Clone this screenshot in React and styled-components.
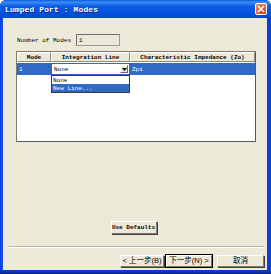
import React from "react";
import styled, { createGlobalStyle } from "styled-components";

const Global = createGlobalStyle`
  html, body { margin: 0; padding: 0; background: #fff; }
  body { width: 271px; height: 274px; overflow: hidden; }
`;

const Frame = styled.div`
  width: 271px;
  height: 274px;
  box-sizing: border-box;
  display: flex;
  flex-direction: column;
  background: linear-gradient(90deg, #0831d9 0, #1a5ae8 2px, #0a3fd4 3px, #0a3fd4 100%);
  border-radius: 6px 6px 0 0;
  padding: 0 4px 4px 3px;
  position: relative;
  &::after {
    content: "";
    position: absolute;
    left: 0; right: 0; bottom: 0; height: 4px;
    background: linear-gradient(180deg, #0a3fd4, #0831a8 70%, #001c7a);
  }
`;

const TitleBar = styled.div`
  height: 18px;
  margin: 0 -4px 0 -3px;
  padding: 0 5px 0 5px;
  display: flex;
  align-items: center;
  justify-content: space-between;
  border-radius: 6px 6px 0 0;
  background: linear-gradient(180deg, #0a5ae0 0%, #3d8cf3 12%, #0c5be6 35%, #0453dd 70%, #0447c8 100%);
`;

const Title = styled.span`
  font-family: "Liberation Mono", "DejaVu Sans Mono", monospace;
  font-weight: bold;
  font-size: 8px;
  color: #fff;
  text-shadow: 1px 1px 0 #0a1e6e;
  letter-spacing: 0.1px;
  margin-top: 1px;
`;

const CloseBtn = styled.div`
  width: 12px;
  height: 12px;
  box-sizing: border-box;
  border: 1px solid #fff;
  border-radius: 2px;
  background: radial-gradient(circle at 70% 80%, #c6401c 0, #e46d47 60%, #f08f6f 100%);
  display: flex;
  align-items: center;
  justify-content: center;
  margin-right: -1px;
`;

const Body = styled.div`
  flex: 1;
  background: #ece9d8;
  display: flex;
  flex-direction: column;
  padding: 16px 11px 3px 13px;
  position: relative;
  z-index: 1;
`;

const Small = styled.span`
  font-family: "Liberation Mono", "DejaVu Sans Mono", monospace;
  font-size: 6px;
  font-weight: ${(p) => (p.$bold ? "bold" : "normal")};
  color: #000;
  white-space: pre;
`;

const FieldRow = styled.div`
  display: flex;
  align-items: center;
  gap: 5px;
  height: 12px;
  padding-left: 1px;
`;

const NumInput = styled.div`
  width: 44px;
  height: 12px;
  box-sizing: border-box;
  border: 1px solid #9a9a9a;
  border-left-color: #6f6f6f;
  border-top-color: #6f6f6f;
  background: #ece9d8;
  display: flex;
  align-items: center;
  padding-left: 2px;
`;

const Table = styled.div`
  margin-top: 5px;
  width: 240px;
  height: 91px;
  box-sizing: border-box;
  border: 1px solid #7a7a7a;
  border-right-color: #5a5a5a;
  border-bottom-color: #5a5a5a;
  background: #fff;
  position: relative;
`;

const Grid = styled.div`
  display: grid;
  grid-template-columns: 34px 79px 1fr;
`;

const HeadCell = styled.div`
  height: 10px;
  box-sizing: border-box;
  background: #ece9d8;
  border-top: 1px solid #fff;
  border-left: 1px solid #fff;
  border-right: 1px solid #8c8c8c;
  border-bottom: 1px solid #8c8c8c;
  display: flex;
  align-items: center;
  justify-content: center;
`;

const Row = styled.div`
  grid-column: 1 / -1;
  display: grid;
  grid-template-columns: 34px 79px 1fr;
  height: 12px;
  margin-top: 1px;
  background: #316ac5;
`;

const Cell = styled.div`
  display: flex;
  align-items: center;
  padding-left: 2px;
  & > span { color: #fff; }
`;

const Combo = styled.div`
  margin: 1px 1px 0 1px;
  height: 10px;
  background: #fff;
  display: flex;
  align-items: center;
  justify-content: space-between;
  padding-left: 2px;
  box-sizing: border-box;
  & > span { color: #000; }
`;

const ComboArrow = styled.div`
  width: 8px;
  height: 8px;
  margin-right: 1px;
  box-sizing: border-box;
  background: #ece9d8;
  border-top: 1px solid #fff;
  border-left: 1px solid #fff;
  border-right: 1px solid #6a6a6a;
  border-bottom: 1px solid #6a6a6a;
  display: flex;
  align-items: center;
  justify-content: center;
`;

const DropList = styled.div`
  position: absolute;
  left: 34px;
  top: 23px;
  width: 79px;
  box-sizing: border-box;
  border: 1px solid #3a3a3a;
  background: #fff;
  display: flex;
  flex-direction: column;
`;

const DropItem = styled.div`
  height: 8px;
  display: flex;
  align-items: center;
  padding-left: 1px;
  background: ${(p) => (p.$active ? "#316ac5" : "#fff")};
  & > span { color: ${(p) => (p.$active ? "#fff" : "#000")}; }
`;

const Spacer = styled.div`
  flex: 1;
`;

const CenterRow = styled.div`
  display: flex;
  justify-content: center;
  padding-right: 5px;
`;

const Btn = styled.div`
  width: ${(p) => p.$w}px;
  height: ${(p) => p.$h ?? 13}px;
  margin-left: ${(p) => p.$ml ?? 0}px;
  box-sizing: border-box;
  background: #ece9d8;
  border-top: 1px solid #fff;
  border-left: 1px solid #fff;
  border-right: 1px solid #7b7b7b;
  border-bottom: 1px solid #7b7b7b;
  box-shadow: ${(p) => (p.$default ? "0 0 0 1px #000" : "1px 1px 0 #404040")};
  display: flex;
  align-items: center;
  justify-content: center;
`;

const BtnText = styled.span`
  font-family: "Liberation Sans", "Noto Sans CJK SC", sans-serif;
  font-size: 7.5px;
  color: #000;
  white-space: pre;
  line-height: 1;
`;

const Separator = styled.div`
  margin: 12px -8px 0 -7px;
  height: 1px;
  background: #b9b6a6;
  border-bottom: 1px solid #fff;
`;

const ButtonRow = styled.div`
  display: flex;
  justify-content: flex-end;
  align-items: center;
  margin-top: 7px;
  margin-right: -8px;
  gap: 2px;
`;

export default function App() {
  return (
    <>
      <Global />
      <Frame>
        <TitleBar>
          <Title>Lumped Port : Modes</Title>
          <CloseBtn>
            <svg width="8" height="8" viewBox="0 0 8 8">
              <path d="M1 1 L7 7 M7 1 L1 7" stroke="#fff" strokeWidth="1.6" />
            </svg>
          </CloseBtn>
        </TitleBar>
        <Body>
          <FieldRow>
            <Small>Number of Modes</Small>
            <NumInput>
              <Small>1</Small>
            </NumInput>
          </FieldRow>
          <Table>
            <Grid>
              <HeadCell><Small $bold>Mode</Small></HeadCell>
              <HeadCell><Small $bold>Integration Line</Small></HeadCell>
              <HeadCell><Small $bold>Characteristic Impedance (Zo)</Small></HeadCell>
              <Row>
                <Cell><Small>1</Small></Cell>
                <Combo>
                  <Small>None</Small>
                  <ComboArrow>
                    <svg width="5" height="3" viewBox="0 0 5 3">
                      <path d="M0 0 H5 L2.5 3 Z" fill="#000" />
                    </svg>
                  </ComboArrow>
                </Combo>
                <Cell><Small>Zpi</Small></Cell>
              </Row>
            </Grid>
            <DropList>
              <DropItem><Small>None</Small></DropItem>
              <DropItem $active><Small>New Line...</Small></DropItem>
            </DropList>
          </Table>
          <Spacer />
          <CenterRow>
            <Btn $w={46}><Small $bold>Use Defaults</Small></Btn>
          </CenterRow>
          <Separator />
          <ButtonRow>
            <Btn $w={44} $h={12}><BtnText>{"< 上一步(B)"}</BtnText></Btn>
            <Btn $w={46} $h={12} $default><BtnText>{"下一步(N) >"}</BtnText></Btn>
            <Btn $w={47} $h={12} $ml={3}><BtnText>取消</BtnText></Btn>
          </ButtonRow>
        </Body>
      </Frame>
    </>
  );
}
